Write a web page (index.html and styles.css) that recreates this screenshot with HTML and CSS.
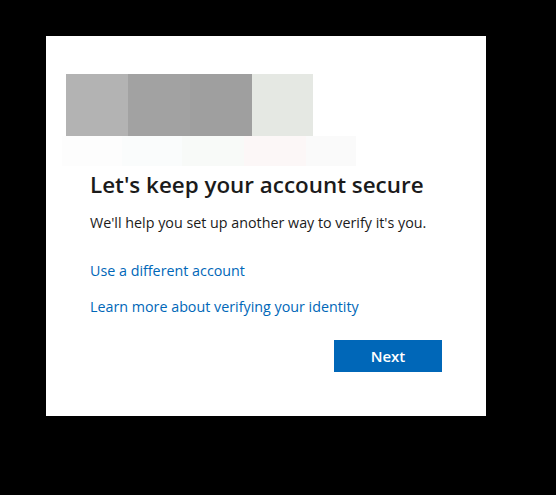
FILE: index.html
```html
<!DOCTYPE html>
<html>
<head>
  <meta charset="UTF-8">
  <title>Let's keep your account secure</title>
  <link rel="stylesheet" href="styles.css">
</head>
<body>
<div class="card">
  <div class="logo">
    <div class="row top">
      <span class="px c1"></span>
      <span class="px c2"></span>
      <span class="px c3"></span>
      <span class="px c4"></span>
    </div>
    <div class="row bottom">
      <span class="px d1"></span>
      <span class="px d2"></span>
      <span class="px d3"></span>
      <span class="px d4"></span>
      <span class="px d5"></span>
    </div>
  </div>
  <div class="content">
    <h1>Let's keep your account secure</h1>
    <p class="desc">We'll help you set up another way to verify it's you.</p>
    <a href="#" class="link first">Use a different account</a>
    <a href="#" class="link">Learn more about verifying your identity</a>
    <div class="actions">
      <button type="button" class="next">Next</button>
    </div>
  </div>
</div>
</body>
</html>
```

FILE: styles.css
```css
body {
  margin: 0;
  background: #000;
  font-family: "Open Sans", "Noto Sans", sans-serif;
}

.card {
  margin: 36px 0 0 46px;
  width: 440px;
  height: 380px;
  background: #fff;
  box-sizing: border-box;
  padding-top: 38px;
}

.logo .row {
  display: flex;
}

.logo .top {
  margin-left: 20px;
  height: 62px;
}

.logo .bottom {
  margin-left: 16px;
  height: 30px;
}

.px {
  display: block;
  height: 100%;
  width: 62px;
}

.c1 { background: #b3b3b3; }
.c2 { background: #a2a2a2; }
.c3 { background: #9f9f9f; }
.c4 { background: #e5e8e3; width: 61px; }

.d1 { background: #fdfdfd; width: 60px; }
.d2 { background: #fafcfc; width: 60px; }
.d3 { background: #f8faf8; width: 62px; }
.d4 { background: #fcf7f7; width: 62px; }
.d5 { background: #fafafa; width: 50px; }

.content {
  padding: 0 44px;
}

h1 {
  margin: 1px 0 0;
  font-size: 22.4px;
  font-weight: 600;
  color: #1b1b1b;
  line-height: 36px;
}

.desc {
  margin: 10px 0 0;
  font-size: 14.3px;
  line-height: 20px;
  color: #1b1b1b;
}

.link {
  display: block;
  font-size: 14.3px;
  line-height: 20px;
  color: #0067b8;
  text-decoration: none;
  margin-top: 16px;
}

.link.first {
  margin-top: 28px;
}

.actions {
  display: flex;
  justify-content: flex-end;
  margin-top: 23px;
}

.next {
  width: 108px;
  height: 32px;
  border: none;
  background: #0067b8;
  color: #fff;
  font-family: inherit;
  font-size: 15px;
  font-weight: 600;
}
```
